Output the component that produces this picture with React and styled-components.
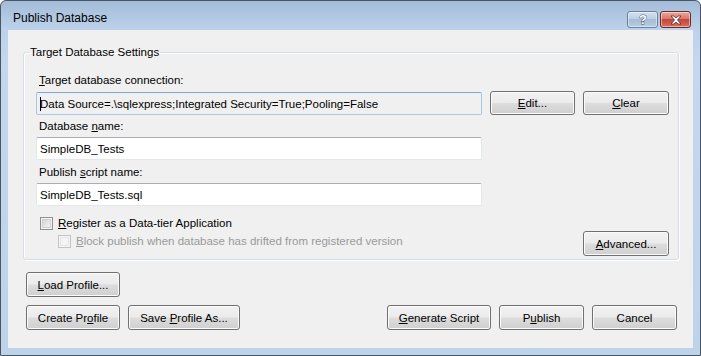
import styled, { createGlobalStyle } from "styled-components";

const GlobalStyle = createGlobalStyle`
  html, body {
    margin: 0;
    padding: 0;
    background: #ffffff;
  }
  body {
    font-family: "Liberation Sans", Arial, sans-serif;
    font-size: 11.5px;
    color: #000000;
  }
`;

function Key({ children }) {
  return <u>{children}</u>;
}

function App() {
  return (
    <>
      <GlobalStyle />
      <Window>
        <TitleBar>
          <Title>Publish Database</Title>
          <CaptionButtons>
            <HelpButton>
              <svg width="14" height="15" viewBox="0 0 14 15">
                <text
                  x="7"
                  y="12"
                  textAnchor="middle"
                  fontFamily="Liberation Sans, sans-serif"
                  fontWeight="bold"
                  fontSize="13"
                  fill="#ffffff"
                  stroke="#3d4d63"
                  strokeWidth="0.9"
                  paintOrder="stroke"
                >
                  ?
                </text>
              </svg>
            </HelpButton>
            <CloseButton>
              <svg width="14" height="10" viewBox="0 0 14 10">
                <path
                  d="M2 1 L5 1 L7 3 L9 1 L12 1 L8.5 5 L12 9 L9 9 L7 7 L5 9 L2 9 L5.5 5 Z"
                  fill="#ffffff"
                  stroke="#5a2a25"
                  strokeWidth="0.8"
                  strokeLinejoin="round"
                />
              </svg>
            </CloseButton>
          </CaptionButtons>
        </TitleBar>

        <Client>
          <GroupBox>
            <Legend>Target Database Settings</Legend>
            <GroupBody>
              <Label>
                <Key>T</Key>arget database connection:
              </Label>
              <ConnectionRow>
                <TextBox $readOnly>
                  <Caret />
                  Data Source=.\sqlexpress;Integrated Security=True;Pooling=False
                </TextBox>
                <Button $w={85} $h={24}>
                  <span>
                    <Key>E</Key>dit...
                  </span>
                </Button>
                <Button $w={86} $h={24}>
                  <span>
                    <Key>C</Key>lear
                  </span>
                </Button>
              </ConnectionRow>

              <Label $gap={3}>
                Database <Key>n</Key>ame:
              </Label>
              <TextBox $gap={3}>SimpleDB_Tests</TextBox>

              <Label $gap={4}>
                Publish <Key>s</Key>cript name:
              </Label>
              <TextBox $gap={3}>SimpleDB_Tests.sql</TextBox>

              <CheckRow $indent={4} $gap={9}>
                <CheckBox />
                <span>
                  <Key>R</Key>egister as a Data-tier Application
                </span>
              </CheckRow>

              <LastRow>
                <CheckRow $indent={22} $gap={2} $disabled>
                  <CheckBox $disabled />
                  <span>
                    <Key>B</Key>lock publish when database has drifted from
                    registered version
                  </span>
                </CheckRow>
                <Button $w={86} $h={25}>
                  <span>
                    <Key>A</Key>dvanced...
                  </span>
                </Button>
              </LastRow>
            </GroupBody>
          </GroupBox>

          <Footer>
            <Button $w={94} $h={25}>
              <span>
                <Key>L</Key>oad Profile...
              </span>
            </Button>
            <FooterRow>
              <ButtonGroup>
                <Button $w={94} $h={25}>
                  <span>
                    Create Pr<Key>o</Key>file
                  </span>
                </Button>
                <Button $w={112} $h={25}>
                  <span>
                    Save <Key>P</Key>rofile As...
                  </span>
                </Button>
              </ButtonGroup>
              <ButtonGroup>
                <Button $w={104} $h={25}>
                  <span>
                    <Key>G</Key>enerate Script
                  </span>
                </Button>
                <Button $w={85} $h={25}>
                  <span>
                    P<Key>u</Key>blish
                  </span>
                </Button>
                <Button $w={85} $h={25}>
                  <span>Cancel</span>
                </Button>
              </ButtonGroup>
            </FooterRow>
          </Footer>
        </Client>
      </Window>
    </>
  );
}

const Window = styled.div`
  width: 701px;
  height: 356px;
  box-sizing: border-box;
  border: 1px solid #4a5566;
  border-radius: 6px 6px 0 0;
  background: linear-gradient(180deg, #a3bcd8 0px, #bcd2ea 28px, #c3d8ee 60px, #bdd3ea 100%);
  padding: 0 7px 7px 7px;
  display: flex;
  flex-direction: column;
  overflow: hidden;
`;

const TitleBar = styled.div`
  height: 29px;
  display: flex;
  align-items: flex-start;
  justify-content: space-between;
`;

const Title = styled.div`
  margin: 9px 0 0 5px;
  line-height: 16px;
  font-size: 12px;
  color: #000000;
`;

const CaptionButtons = styled.div`
  display: flex;
  gap: 2px;
  margin-top: 10px;
  margin-right: 2px;
`;

const CaptionButton = styled.div`
  height: 17px;
  box-sizing: border-box;
  border-radius: 3px;
  display: flex;
  align-items: center;
  justify-content: center;
  box-shadow: inset 0 0 0 1px rgba(255, 255, 255, 0.45);
`;

const HelpButton = styled(CaptionButton)`
  width: 31px;
  border: 1px solid #6d8099;
  background: linear-gradient(180deg, #d3e1f0 0%, #bccfe4 45%, #a4bcd6 50%, #b7cce3 100%);
`;

const CloseButton = styled(CaptionButton)`
  width: 31px;
  border: 1px solid #6e2a23;
  background: linear-gradient(180deg, #e8a99f 0%, #d9786b 45%, #c5463a 50%, #d4705f 100%);
`;

const Client = styled.div`
  flex: 1;
  background: #f0f0f0;
  padding: 14px 15px 0 15px;
  display: flex;
  flex-direction: column;
`;

const GroupBox = styled.fieldset`
  margin: 0;
  padding: 0;
  border: 1px solid #d5dfe5;
  border-radius: 3px;
  box-shadow: inset 1px 1px 0 #ffffff, 1px 1px 0 #ffffff;
`;

const Legend = styled.legend`
  margin-left: 5px;
  padding: 0 1px;
  line-height: 16px;
`;

const GroupBody = styled.div`
  padding: 12px 9px 3px 12px;
  display: flex;
  flex-direction: column;
`;

const Label = styled.div`
  line-height: 16px;
  margin: ${(p) => p.$gap || 0}px 0 0 3px;
`;

const ConnectionRow = styled.div`
  margin-top: 3px;
  display: flex;
  align-items: flex-end;
  gap: 8px;
`;

const TextBox = styled.div`
  box-sizing: border-box;
  height: 23px;
  width: 446px;
  flex-shrink: 0;
  margin-top: ${(p) => p.$gap || 0}px;
  padding: 0 3px;
  display: flex;
  align-items: center;
  white-space: nowrap;
  overflow: hidden;
  background: ${(p) => (p.$readOnly ? "#f0f0f0" : "#ffffff")};
  border: 1px solid ${(p) => (p.$readOnly ? "#a9c8e8" : "#e2e7ec")};
  border-top-color: ${(p) => (p.$readOnly ? "#7fa9d4" : "#abadb3")};
  border-radius: 2px;
`;

const Caret = styled.span`
  display: inline-block;
  width: 1px;
  height: 14px;
  background: #000000;
  margin-right: -1px;
`;

const Button = styled.div`
  box-sizing: border-box;
  width: ${(p) => p.$w}px;
  height: ${(p) => p.$h}px;
  flex-shrink: 0;
  display: flex;
  align-items: center;
  justify-content: center;
  white-space: nowrap;
  border: 1px solid #707070;
  border-radius: 3px;
  background: linear-gradient(180deg, #f2f2f2 0%, #ebebeb 48%, #dddddd 52%, #cfcfcf 100%);
  box-shadow: inset 0 0 0 1px #fbfbfb;
`;

const CheckRow = styled.div`
  display: flex;
  align-items: center;
  gap: 5px;
  line-height: 16px;
  margin: ${(p) => p.$gap}px 0 0 ${(p) => p.$indent}px;
  color: ${(p) => (p.$disabled ? "#9a9a9a" : "#000000")};
  white-space: nowrap;
`;

const CheckBox = styled.span`
  box-sizing: border-box;
  width: 13px;
  height: 13px;
  flex-shrink: 0;
  border: 1px solid ${(p) => (p.$disabled ? "#c4c4c4" : "#8e8f8f")};
  background: ${(p) =>
    p.$disabled
      ? "#f4f4f4"
      : "linear-gradient(135deg, #cbcbcb 0%, #e9e9e9 60%, #f4f4f4 100%)"};
  box-shadow: inset 0 0 0 1px #f4f4f4, inset 0 0 0 2px
    ${(p) => (p.$disabled ? "#e6e6e6" : "#d0d0d0")};
`;

const LastRow = styled.div`
  display: flex;
  justify-content: space-between;
  align-items: flex-start;
`;

const Footer = styled.div`
  padding: 12px 1px 0 3px;
  display: flex;
  flex-direction: column;
  align-items: flex-start;
  gap: 8px;
`;

const FooterRow = styled.div`
  align-self: stretch;
  display: flex;
  justify-content: space-between;
`;

const ButtonGroup = styled.div`
  display: flex;
  gap: 8px;
`;

export default App;
